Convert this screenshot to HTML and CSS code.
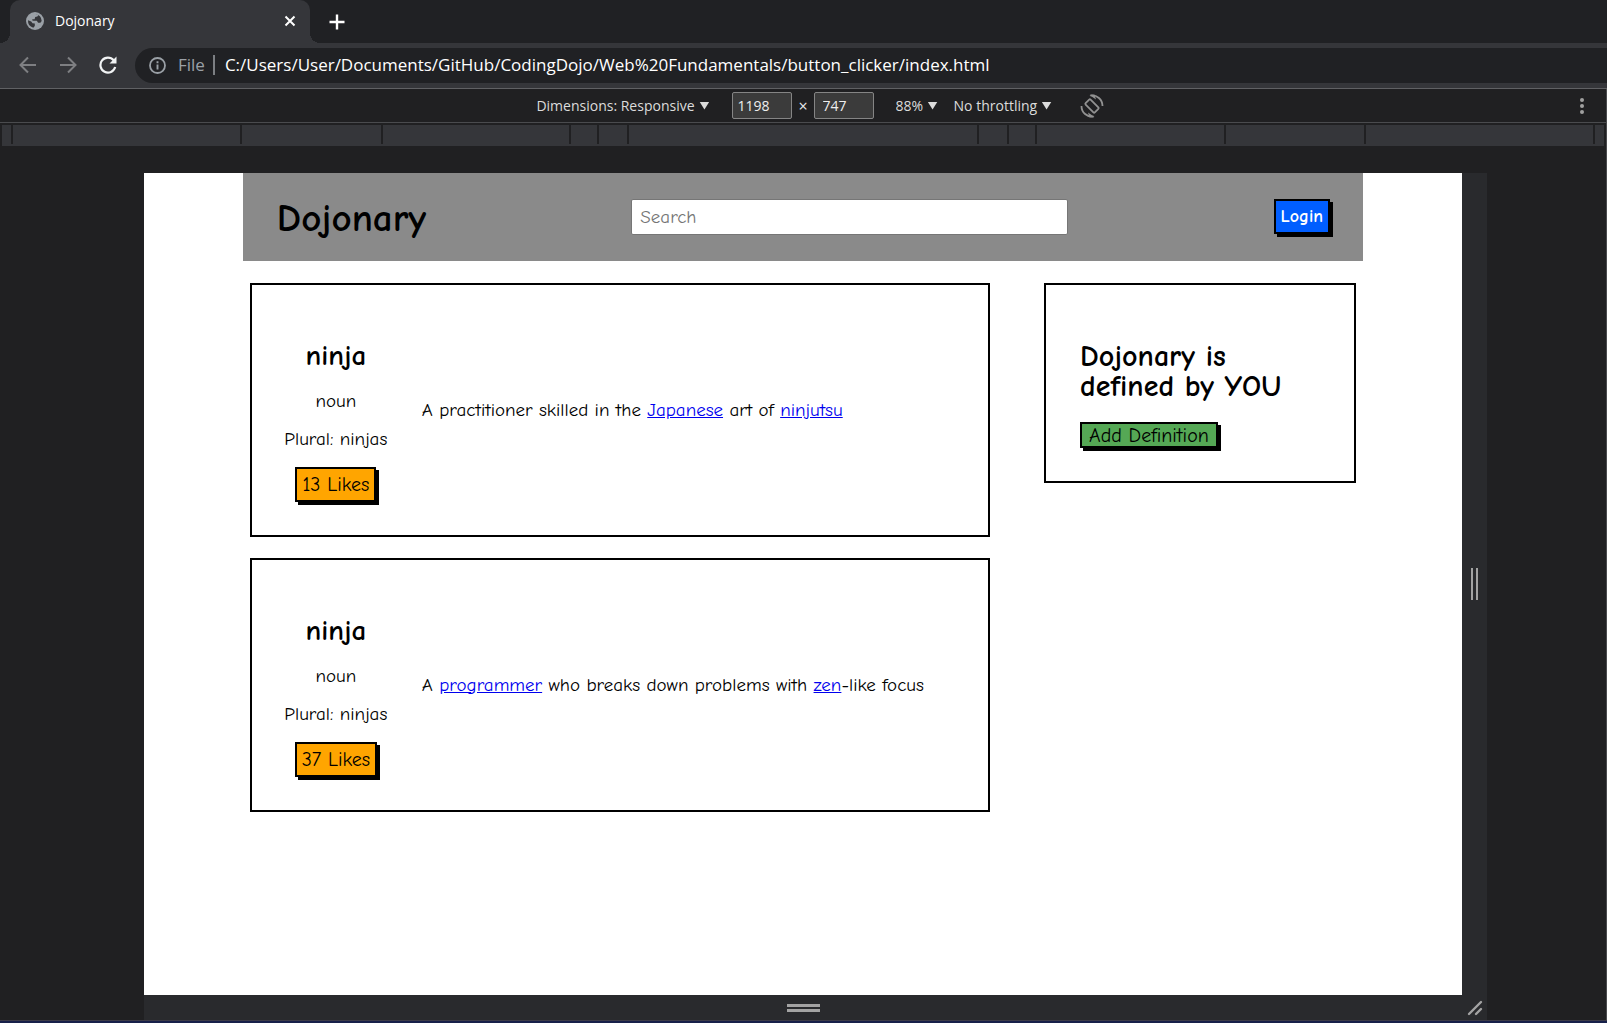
FILE: index.html
```html
<!DOCTYPE html>
<html lang="en">
<head>
<meta charset="utf-8">
<title>Dojonary</title>
<link rel="stylesheet" href="styles.css">
</head>
<body>
<div class="browser">
  <div class="tabstrip">
    <div class="tab">
      <svg class="tab-icon" viewBox="0 0 18 18" aria-hidden="true"><circle cx="9" cy="9" r="9" fill="#9aa0a6"/><path d="M2 8.300l3.200 1.200 1.300 1.700 2.300.4v2.300l-1.500 1.800A7.200 7.200 0 0 1 2 8.300zM9.400 2a7 7 0 0 1 3 .9l-1 1.500-2.200.7-.6 2.100H6.200l.4 1.500h4.200l1.300 2.100h2.300l1.300-1.700A7.100 7.100 0 0 0 9.400 2z" fill="#35363a"/></svg>
      <span class="tab-title">Dojonary</span>
      <button class="icon-button" aria-label="Close tab"><svg width="12" height="12" viewBox="0 0 12 12"><path d="M1.500 1.500l9 9M10.500 1.500l-9 9" stroke="#fff" stroke-width="2"/></svg></button>
    </div>
    <button class="icon-button" aria-label="New tab"><svg width="16" height="16" viewBox="0 0 16 16"><path d="M8 .500v15M.500 8h15" stroke="#fff" stroke-width="2.400"/></svg></button>
  </div>
  <div class="toolbar">
    <button class="icon-button" aria-label="Back"><svg width="18" height="18" viewBox="0 0 18 18"><path d="M17 9H2M9 1.500L1.500 9 9 16.500" fill="none" stroke="#7e7f82" stroke-width="2"/></svg></button>
    <button class="icon-button" aria-label="Forward"><svg width="18" height="18" viewBox="0 0 18 18"><path d="M1 9h15M9 1.500L16.500 9 9 16.500" fill="none" stroke="#7e7f82" stroke-width="2"/></svg></button>
    <button class="icon-button" aria-label="Reload"><svg width="18" height="18" viewBox="0 0 18 18"><path d="M14.700 4.200A7.500 7.500 0 1 0 16.200 11" fill="none" stroke="#f1f3f4" stroke-width="2.200"/><path d="M17.500 .500v7h-7z" fill="#f1f3f4"/></svg></button>
    <div class="address">
      <svg width="17" height="17" viewBox="0 0 17 17" aria-hidden="true"><circle cx="8.500" cy="8.500" r="7.500" fill="none" stroke="#9aa0a6" stroke-width="1.800"/><path d="M8.500 7.500v5M8.500 4.300v2" stroke="#9aa0a6" stroke-width="1.900"/></svg>
      <span class="scheme">File</span>
      <input class="url" type="text" aria-label="Address" value="C:/Users/User/Documents/GitHub/CodingDojo/Web%20Fundamentals/button_clicker/index.html">
    </div>
  </div>

  <div class="devtools">
    <div class="device-bar">
      <div class="device-controls">
        <label class="picker"><select aria-label="Device"><option>Dimensions: Responsive</option></select><span class="caret"></span></label>
        <div class="dimensions">
          <input type="text" aria-label="Width" value="1198">
          <span>×</span>
          <input class="height" type="text" aria-label="Height" value="747">
        </div>
        <label class="picker"><select aria-label="Zoom"><option>88%</option></select><span class="caret"></span></label>
        <label class="picker"><select aria-label="Throttling"><option>No throttling</option></select><span class="caret"></span></label>
        <button class="icon-button rotate" aria-label="Rotate"><svg width="24" height="24" viewBox="0 0 24 24"><g fill="none" stroke="#919191" stroke-width="1.800"><rect x="8.500" y="5.500" width="7" height="13" rx="1" transform="rotate(-45 12 12)"/><path d="M1.500 12A10.500 10.500 0 0 0 13.500 22.500M22.500 12A10.500 10.500 0 0 0 10.500 1.500"/></g><path d="M9.500 1l5-.500 1.500 5zM14.500 23l-5 .500L8 18.500z" fill="#919191"/></svg></button>
      </div>
      <button class="icon-button" aria-label="More options"><svg width="4" height="16" viewBox="0 0 4 16"><g fill="#a0a0a0"><circle cx="2" cy="2" r="2"/><circle cx="2" cy="8" r="2"/><circle cx="2" cy="14" r="2"/></g></svg></button>
    </div>
    <div class="ruler"><i></i><i></i><i></i><i></i><i></i><i></i><i></i><i></i><i></i><i></i><i></i><i></i><i></i></div>

    <div class="stage">
      <div class="viewport">
        <div class="site">
          <header class="site-header">
            <h1>Dojonary</h1>
            <input class="search" type="text" placeholder="Search" aria-label="Search">
            <button class="button login">Login</button>
          </header>
          <main class="content">
            <div class="definitions">
              <article class="card entry">
                <div class="term">
                  <h2>ninja</h2>
                  <p>noun</p>
                  <p>Plural: ninjas</p>
                  <button class="button likes">13 Likes</button>
                </div>
                <p class="meaning">A practitioner skilled in the <a href="#">Japanese</a> art of <a href="#">ninjutsu</a></p>
              </article>
              <article class="card entry">
                <div class="term">
                  <h2>ninja</h2>
                  <p>noun</p>
                  <p>Plural: ninjas</p>
                  <button class="button likes">37 Likes</button>
                </div>
                <p class="meaning">A <a href="#">programmer</a> who breaks down problems with <a href="#">zen</a>-like focus</p>
              </article>
            </div>
            <aside class="card about">
              <h2>Dojonary is defined by YOU</h2>
              <button class="button add">Add Definition</button>
            </aside>
          </main>
        </div>
      </div>
      <div class="resizer vertical"><span class="grip"></span></div>
      <div class="resizer horizontal"><span class="grip"></span></div>
      <div class="resizer corner"><svg width="16" height="16" viewBox="0 0 16 16"><path d="M2 14L14 2M9 14l5-5" stroke="#a3a3a3" stroke-width="2.400" stroke-linecap="round"/></svg></div>
    </div>
  </div>
  <div class="desktop-edge"></div>
</div>
</body>
</html>
```
FILE: styles.css
```css
* { box-sizing: border-box; }

body {
  margin: 0;
  background: #202124;
  color: #e8eaed;
  font: 14px/20px "Segoe UI", "Open Sans", sans-serif;
}

h1, h2, p { margin: 0; }

.browser {
  display: flex;
  flex-direction: column;
  min-height: 100vh;
}

.icon-button {
  display: flex;
  align-items: center;
  justify-content: center;
  padding: 0;
  border: 0;
  background: none;
}

/* Browser chrome */
.tabstrip {
  display: flex;
  align-items: center;
  gap: 19px;
  height: 43px;
  padding-left: 10px;
}

.tab {
  position: relative;
  display: flex;
  align-items: center;
  gap: 11px;
  width: 300px;
  height: 43px;
  padding: 0 14px 2px 16px;
  border-radius: 10px 10px 0 0;
  background: #35363a;
}

.tab::before,
.tab::after {
  content: "";
  position: absolute;
  bottom: 0;
  width: 10px;
  height: 10px;
}

.tab::before {
  left: -10px;
  background: radial-gradient(circle at 0 0, transparent 10px, #35363a 10px);
}

.tab::after {
  right: -10px;
  background: radial-gradient(circle at 100% 0, transparent 10px, #35363a 10px);
}

.tab-icon { width: 18px; height: 18px; }
.tab-title { flex: 1; color: #fff; }

.toolbar {
  display: flex;
  align-items: center;
  gap: 22px;
  height: 46px;
  padding: 0 0 1px 19px;
  border-bottom: 1px solid #606164;
  background: #35363a;
}

.address {
  display: flex;
  flex: 1;
  align-items: center;
  height: 35px;
  margin-left: -4px;
  padding-left: 14px;
  border-radius: 18px 0 0 18px;
  background: #202124;
  font-size: 17px;
}

.scheme {
  margin-left: 12px;
  padding-right: 8px;
  border-right: 2px solid #7c7f83;
  color: #9aa0a6;
}

.url {
  flex: 1;
  padding: 0 0 0 10px;
  border: 0;
  background: none;
  color: #fff;
  font: inherit;
}

/* Device toolbar */
.devtools {
  display: flex;
  flex: 1;
  flex-direction: column;
  border-right: 1px solid #4a4b4e;
  background: #202022;
}

.device-bar {
  display: flex;
  align-items: center;
  height: 34px;
  padding: 0 22px 0 60px;
  border-bottom: 1px solid #4a4b4e;
}

.device-controls {
  display: flex;
  flex: 1;
  align-items: center;
  justify-content: center;
  gap: 16px;
}

.picker { display: flex; align-items: center; gap: 4px; }

.picker select {
  appearance: none;
  padding: 0;
  border: 0;
  background: none;
  color: #dcdcdc;
  font: inherit;
}

.caret {
  width: 10px;
  height: 8px;
  background: #dcdcdc;
  clip-path: polygon(0 0, 100% 0, 50% 100%);
}

.dimensions { display: flex; align-items: center; gap: 6px; margin: 0 6px 0 7px; }

.dimensions input {
  width: 60px;
  height: 27px;
  padding: 0 4px;
  border: 1px solid #858585;
  border-radius: 2px;
  background: #3b3b3b;
  color: #eee;
  font: inherit;
}

.dimensions span { font-size: 16px; }
.dimensions .height { padding-left: 8px; }
.rotate { margin-left: 12px; }

.ruler {
  display: grid;
  grid-template-columns: 9fr 227fr 139fr 186fr 26fr 28fr 348fr 28fr 26fr 187fr 138fr 227fr 9fr;
  gap: 2px;
  height: 21px;
  margin: 2px 2px 0;
  border-bottom: 2px solid #35363a;
}

.ruler i { background: #35363a; }

/* Emulated viewport */
.stage {
  display: grid;
  flex: 1;
  grid-template-columns: 1fr 25px;
  grid-template-rows: 1fr 25px;
  padding: 27px 119px 0 144px;
}

.viewport { background: #fff; }

.resizer {
  display: flex;
  align-items: center;
  justify-content: center;
  background: #292a2d;
}

.grip { border: solid #a3a3a3; }
.vertical .grip { width: 7px; height: 32px; border-width: 0 2px; }
.horizontal .grip { width: 33px; height: 8px; border-width: 3px 0; }

/* Dojonary page */
.site {
  width: 85%;
  margin: 0 auto;
  color: #000;
  font: 19px/21px "Comic Sans MS", "Comic Neue", "Open Sans", sans-serif;
}

.site-header {
  display: flex;
  align-items: flex-start;
  justify-content: space-between;
  height: 88px;
  padding: 26px 33px 26px 34px;
  background: #8a8a8a;
}

h1 { font-size: 39px; line-height: 40px; }

.search {
  width: 41.5%;
  height: 36px;
  padding: 0 8px;
  border: 1px solid #767676;
  border-radius: 2px;
  background: #fff;
  font: inherit;
}

.search::placeholder { color: #757575; }

.button {
  height: 35px;
  padding: 0 5px;
  border: 2px solid #000;
  box-shadow: 3px 3px #000;
  color: #000;
  font: inherit;
  font-size: 20px;
  white-space: nowrap;
}

.login { background: #005eff; color: #fff; font-size: 18px; font-weight: 600; }
.likes { background: #ffa500; }
.add { height: 26px; padding: 0 7px; background: #55a855; }

.content {
  display: grid;
  grid-template-columns: 740fr 312fr;
  gap: 54px;
  align-items: start;
  padding: 22px 7px;
}

.definitions { display: grid; gap: 21px; }

.card { padding: 33px 32px; border: 2px solid #000; background: #fff; }

.entry { display: flex; align-items: center; gap: 34px; }

.term {
  display: flex;
  flex-direction: column;
  align-items: center;
  gap: 17px;
  width: 104px;
  white-space: nowrap;
}

.term h2 { margin-top: 20px; font-size: 29px; line-height: 36px; }

.meaning a { color: #00e; }

.about { display: grid; gap: 20px; justify-items: start; padding: 33px 34px; }
.about h2 { margin-top: 24px; font-size: 30px; font-weight: 600; line-height: 30px; }

.desktop-edge { height: 3px; border-top: 1px solid #3c3b48; background: #17204a; }
```
